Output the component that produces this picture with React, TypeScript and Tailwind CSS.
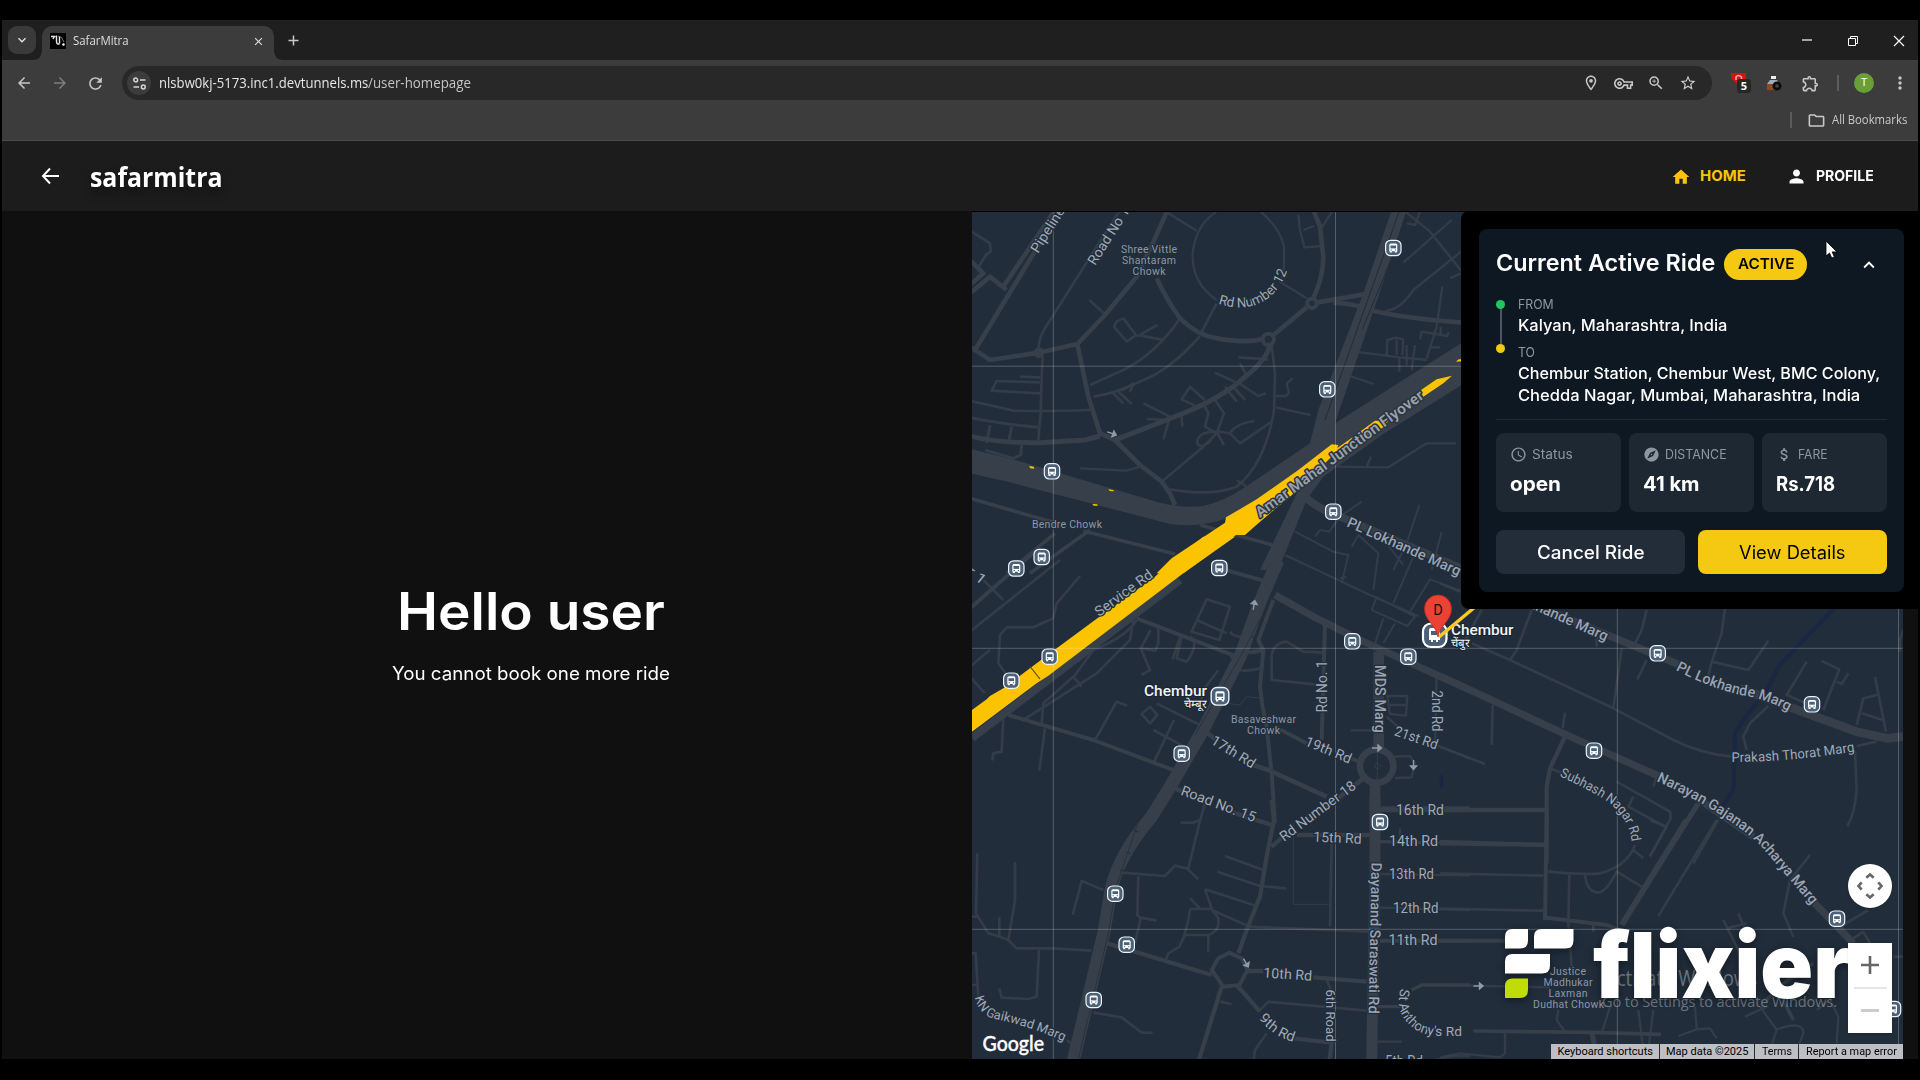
import { useLayoutEffect, useRef, useState } from "react";
import type { ReactNode } from "react";
import {
  MdArrowBack,
  MdArrowForward,
  MdClose,
  MdExplore,
  MdHome,
  MdPerson,
  MdAccessTime,
  MdOutlineLocationOn,
  MdOutlineVpnKey,
  MdStarOutline,
  MdRefresh,
  MdMoreVert,
  MdZoomIn,
  MdOutlineFolder,
  MdOutlineExtension,
  MdKeyboardArrowUp,
  MdKeyboardArrowDown,
  MdAttachMoney,
} from "react-icons/md";

/* One line of text, widened or condensed so that it fills a given width. */
function Fit({ w, className = "", children }: { w: number; className?: string; children: ReactNode }) {
  const ref = useRef<HTMLSpanElement>(null);
  const [k, setK] = useState(1);
  useLayoutEffect(() => {
    const el = ref.current;
    if (el && el.offsetWidth) setK(w / el.offsetWidth);
  }, [w]);
  return (
    <span className={`inline-block whitespace-nowrap text-left ${className}`} style={{ width: w }}>
      <span ref={ref} className="inline-block origin-left" style={{ transform: `scaleX(${k})` }}>
        {children}
      </span>
    </span>
  );
}

/* ---------- browser chrome ---------- */

function TabStrip() {
  return (
    <div className="flex h-10 items-end bg-[#1f1f1f]">
      <div className="mb-1.5 ml-[6px] flex h-7 w-7 items-center justify-center rounded-[9px] bg-[#3a3a3a] text-[#e3e3e3]">
        <MdKeyboardArrowDown size={16} />
      </div>
      <svg className="ml-[-4px]" width="10" height="10" viewBox="0 0 10 10"><path d="M10 0v10H0Q10 10 10 0z" fill="#3c3c3c" /></svg>
      <div className="flex h-[34px] w-[232px] items-center rounded-t-[10px] bg-[#3c3c3c] pb-1 pl-[8px] pr-[9px]">
        <svg width="16" height="16" viewBox="0 0 16 16">
          <rect width="16" height="16" fill="#000" />
          <path d="M1 3.500h4.500M3 6l1.500-3M6.500 2.500v6q0 3 3 2.500M9.500 3.500v7" stroke="#e8e8e8" strokeWidth="1.400" fill="none" />
          <path d="M8 3q4 0 6 6" stroke="#9a9a9a" strokeWidth=".8" fill="none" />
          <circle cx="13.500" cy="11.500" r="1.200" fill="#fff" />
        </svg>
        <Fit w={56} className="ml-[7px] font-['Open_Sans'] text-[12px] text-[#dedede]">SafarMitra</Fit>
        <MdClose className="ml-auto text-[#e0e0e0]" size={13} />
      </div>
      <svg width="10" height="10" viewBox="0 0 10 10"><path d="M0 0v10h10Q0 10 0 0z" fill="#3c3c3c" /></svg>
      <svg className="mb-[13px] ml-[3px]" width="13" height="13" viewBox="0 0 13 13">
        <path d="M6.500 1.500v10M1.500 6.500h10" stroke="#c8c8c8" strokeWidth="1.500" />
      </svg>
      <div className="mb-[13px] ml-auto mr-[13px] flex items-center gap-[34px] text-white">
        <svg width="11" height="13" viewBox="0 0 11 13"><path d="M0 6h10" stroke="#fff" strokeWidth="1.200" /></svg>
        <svg width="12" height="12" viewBox="0 0 12 12"><path d="M1.500 3.500h7v7h-7zM3.500 3.500v-2h7v7h-2" stroke="#fff" fill="none" /></svg>
        <svg width="12" height="12" viewBox="0 0 12 12"><path d="M1 1l10 10M11 1L1 11" stroke="#fff" strokeWidth="1.200" /></svg>
      </div>
    </div>
  );
}

function AddressBar() {
  return (
    <div className="flex h-[46px] items-center bg-[#3c3c3c] text-[#c7c7c7]">
      <MdArrowBack className="ml-[13px]" size={18} />
      <MdArrowForward className="ml-[18px] text-[#7d7d7d]" size={18} />
      <MdRefresh className="ml-[17px]" size={19} />
      <div className="ml-[17px] flex h-[34px] w-[1590px] items-center rounded-full bg-[#282828] pl-[5px] pr-[15px]">
        <div className="flex h-[24px] w-[24px] items-center justify-center rounded-full bg-[#3c3c3c]">
          <svg width="13" height="13" viewBox="0 0 13 13" fill="none" stroke="#d5d5d5" strokeWidth="1.500">
            <circle cx="2.700" cy="3" r="1.900" /><path d="M7 3h5.500M.5 10h5.500" /><circle cx="10.300" cy="10" r="1.900" />
          </svg>
        </div>
        <span className="ml-[8px] flex font-['Open_Sans'] text-[14.5px] text-[#e6e6e6]">
          <Fit w={209}>nlsbw0kj-5173.inc1.devtunnels.ms</Fit>
          <Fit w={103} className="text-[#c4c4c4]">/user-homepage</Fit>
        </span>
        <div className="ml-auto flex items-center gap-[14px]">
          <MdOutlineLocationOn size={18} />
          <MdOutlineVpnKey size={19} />
          <MdZoomIn size={18} />
          <MdStarOutline size={18} />
        </div>
      </div>
      <div className="relative ml-[18px] h-[22px] w-[22px]">
        <svg width="18" height="16" viewBox="0 0 18 16">
          <path d="M1 1h15v7l-4 4H7L1 6z" fill="#d01414" />
          <path d="M6 8V5q2.500-3 5.500 0v3" stroke="#f5b0b0" strokeWidth="1.500" fill="none" />
        </svg>
        <span className="absolute left-[7px] top-[7px] flex h-[14px] w-[14px] items-center justify-center rounded-[3px] bg-[#262626] font-['Open_Sans'] text-[11px] font-bold text-white">5</span>
      </div>
      <svg className="ml-[13px]" width="18" height="17" viewBox="0 0 18 17">
        <rect x="2" y="9" width="8" height="6" fill="#8d4a22" /><path d="M2 9l3-4h7l2 4z" fill="#a3a9bd" />
        <rect x="6" y="1" width="5" height="3" fill="#e8eaf5" /><circle cx="12" cy="11" r="4.500" fill="#0d0d0d" /><circle cx="12" cy="11" r="1.800" fill="#444" />
      </svg>
      <MdOutlineExtension className="ml-[18px]" size={19} />
      <div className="ml-[17px] h-4 w-[2px] bg-[#5c5c5c]" />
      <div className="ml-[15px] flex h-5 w-5 items-center justify-center rounded-full bg-[#689f38] font-['Roboto'] text-[11px] text-white">T</div>
      <MdMoreVert className="ml-[16px] shrink-0" size={20} />
    </div>
  );
}

function Bookmarks() {
  return (
    <div className="flex h-[35px] items-center border-b border-[#4b4b4b] bg-[#3c3c3c] pb-[6px] text-[#c9c9c9]">
      <div className="ml-auto h-4 w-[2px] bg-[#5c5c5c]" />
      <MdOutlineFolder className="ml-[15px]" size={19} />
      <Fit w={75} className="ml-[6px] mr-[11px] font-['Open_Sans'] text-[12.5px]">All Bookmarks</Fit>
    </div>
  );
}

function SiteHeader() {
  return (
    <header className="flex h-[70px] items-center bg-[#1c1c1c]">
      <svg className="ml-[39px]" width="20" height="18" viewBox="0 0 20 18">
        <path d="M9 1.500L2 9l7 7.500M2 9h16" stroke="#fff" strokeWidth="2" fill="none" />
      </svg>
      <Fit w={132} className="ml-[29px] pt-[2px] font-['Open_Sans'] text-[26px] font-bold text-white drop-shadow-[0_6px_5px_rgba(0,0,0,0.4)]">safarmitra</Fit>
      <nav className="ml-auto mr-[44px] flex items-center pt-px font-['Inter'] text-[15px] font-bold">
        <MdHome className="text-[#fcc30b]" size={20} />
        <Fit w={46} className="ml-[9px] text-[#fcc30b]">HOME</Fit>
        <MdPerson className="ml-[40px] text-white" size={21} />
        <Fit w={58} className="ml-[9px] text-white">PROFILE</Fit>
      </nav>
    </header>
  );
}

/* ---------- map ---------- */

type Road = [number, string];

/* Road geometry per tile, in third-of-a-pixel units. */
const tiles: { x: number; y: number; roads: Road[] }[] = [
  {
    x: 970, y: 210,
    roads: [
      [14, "M0,410L60,450 205,428 322,402 405,315 500,200 548,100 595,-5M322,402L355,560 390,670 435,690 510,765 575,815 600,850 615,885"],
      [14, "M560,205Q590,270 630,325Q680,375 740,385Q830,400 875,388M910,375L1010,292M1030,265Q1060,200 1060,140L1050,50 1030,0M1040,278L1210,248M1090,278Q1150,280 1200,300Q1300,325 1480,338"],
      [15, "M900,405Q890,450 820,505Q760,560 640,610L440,688V700M0,678Q80,700 210,698L345,690 390,678"],
      [14, "M15,420L240,50 275,0M100,230L255,0M0,250L60,200 110,240M0,225L40,190 0,150"],
      [12, "M878,388a17,17 0 1,0 34,0a17,17 0 1,0 -34,0M1012,280a14,14 0 1,0 28,0a14,14 0 1,0 -28,0M197,428a10,10 0 1,0 20,0a10,10 0 1,0 -20,0"],
      [8, "M5,65L60,100 62,125 50,132 20,180M205,428Q205,385 225,355L380,110 450,0M218,440L215,500 212,610 205,690M150,500L210,502M210,550L65,542 80,513 210,517M0,573Q80,590 130,602Q210,605 360,600"],
      [9, "M0,623Q80,640 205,652M60,645L50,700M125,650L115,700M155,705L152,735 130,745 45,720"],
      [8, "M358,270L405,313M440,335L460,325 498,375 470,395 432,350ZM500,380L562,345M510,376L580,390M690,375L740,280M630,325Q560,430 460,480L360,525M690,378Q600,480 520,510Q440,550 370,560"],
      [7, "M740,270Q665,220 668,130Q675,60 720,20L750,-5M860,-5Q930,50 942,110V165Q940,200 930,215L1010,265M595,10L680,62M985,15L990,60 1003,112 1055,108M1000,60L1032,48M1050,60L1090,0"],
      [8, "M905,405L915,490 912,600Q900,680 870,740Q840,800 800,830Q720,860 600,838M575,815L700,710 740,670M700,580L715,610 705,650 740,670 762,610 735,570M740,665Q680,665 682,700Q690,720 725,690M740,665L762,705M745,665L780,670 810,700 905,635M780,668Q800,640 853,633"],
      [8, "M520,580L600,620 580,688M530,627L590,630M635,620L637,650M705,570L660,530 635,568 685,592M735,488L795,515M765,530L800,575M785,525L825,570M800,515L865,558 888,550M810,460L832,500M805,442L895,448M425,545L460,580M440,540L485,582M455,542L490,520 480,545"],
      [7, "M945,560L957,550 950,520 968,505M915,558H950M918,592L1022,615M330,775L470,782 510,770M800,810L830,830M1130,495L1212,522M1155,425L1290,442 1370,450M1095,770L1255,772 1370,700 1458,700M1190,770L1203,740"],
      [7, "M1300,0L1380,65 1480,190M1445,30L1300,158M1473,125Q1380,200 1330,240Q1290,300 1245,303M1310,40L1335,45 1352,0M1250,435L1252,390 1278,383 1300,388 1297,435M1280,390V435M1310,405V465M1335,405L1325,480M1288,445V485M1417,230L1400,350 1370,445M1350,388L1355,365 1432,378 1436,366M1412,350V375M1380,412H1410M1440,205L1473,190"],
      [11, "M0,865L260,940M340,963L615,1032M690,945L925,1010M360,960L180,1090M255,970L110,1090"],
      [24, "M1010,865Q1060,905 1110,920L1480,1078"],
      [6, "M975,965L1090,1025 1135,1035 1115,1120M1035,980L1050,960 1078,965 1110,920 1175,875M1145,1010L1165,975 1225,1030 1210,1140M1250,1000L1300,1065M1348,885L1310,1000 1270,1080M1415,965L1385,1080"],
    ],
  },
  {
    x: 970, y: 540,
    roads: [
      [12, "M760,88L880,122M0,205L200,30M500,235L800,350M115,525L370,600 610,690M1065,250L1055,600M915,560L1010,610M1130,650L1180,670M1230,805H1500"],
      [8, "M0,275L270,60M30,110L100,180M330,108L260,190 250,235 190,262 110,262 90,285 85,370 110,405M0,380L60,330M0,410L45,460"],
      [22, "M915,165L1040,235 1170,300 1500,450"],
      [6, "M945,45L1200,165 1345,228M1130,110L1110,115M1270,190L1330,50M1320,215L1380,118 1480,155M1205,210L1220,172 1335,230 1312,258 1205,210M1240,235L1215,310M1275,250L1240,310"],
      [8, "M710,178L780,200 748,300 665,275ZM680,240L770,280M780,275Q790,290 815,290M490,240L480,300 380,400 160,540M500,240Q470,290 370,330L315,405 220,490 215,550M310,410L335,440M542,270L512,325 540,390 515,405M515,325L555,332M565,260V310L555,335M630,290L608,358M660,290Q690,310 650,365L620,355 635,290"],
      [12, "M910,180L865,300 880,330M780,350L880,330 870,440Q875,500 890,560L905,700 915,850"],
      [8, "M905,345Q910,310 950,305L1000,335 1065,338M905,345V420L1035,433M800,390Q840,395 870,385M745,390L700,450 690,500"],
      [8, "M100,530L95,635 70,640 67,662M225,565L208,692M375,600L440,485 472,497M550,570L680,640M612,540L550,670M515,522L540,500 562,525 540,550ZM560,490L690,555"],
      [14, "M700,570L740,600M850,675L895,690 1070,770M600,740L640,755M1180,715L1060,810"],
      [20, "M1170,678a50,50 0 1,0 100,0a50,50 0 1,0 -100,0"],
      [32, "M1226,335V625M1215,735V850"],
      [7, "M1270,650L1320,648 1335,670 1325,712 1275,714M1142,571H1230M1400,400L1395,620M1385,610L1500,655M1252,468H1312L1308,527 1260,522ZM1255,495H1308M1250,530L1285,562"],
      [3, "M1222,625V735M1212,678L1222,668 1232,678 1222,688ZM770,490L810,495 830,470 880,475"],
    ],
  },
  {
    x: 970, y: 800,
    roads: [
      [13, "M905,0L912,60 890,170 870,290 830,390 805,460M780,35L905,75M905,140L940,110M980,105H1200M405,428L725,525M755,560L685,785M800,555L870,635M970,715L1085,728 1078,785M830,513H880M1030,532L1190,545"],
      [12, "M725,510L745,475 778,458 815,475 833,510 808,555 760,560Z"],
      [8, "M840,380L1200,395M1085,130L1080,380M765,168L880,210M742,215L870,258 950,265M705,268L860,318M705,268L725,325M725,330L835,378M660,295L690,325M660,327L725,327 745,355Q750,395 715,405H645M660,327L655,360 642,410 628,440 595,460 588,480M715,405V455"],
      [3, "M970,70V313H1080"],
      [8, "M455,218L585,228 615,197 650,205 685,238M655,205L688,70 705,10M632,68L670,68 688,60M505,228L502,345 512,355 495,430M512,353L560,362M400,270L335,243 308,345M750,605L785,612M865,635L895,605 1190,632M890,700L855,750 850,785M1070,540L1085,575M370,638L455,652 515,698 548,698"],
      [8, "M22,160L18,340 55,400 90,410 115,420 140,445 250,445 365,452M135,185V300L115,420M0,350H20M88,350V408M207,450L200,590 175,597 95,593 88,565M0,460L17,460 25,590M0,555H20"],
      [33, "M1215,-10V200L1205,785"],
      [10, "M1230,32H1500M1230,125L1500,130M1325,570L1355,555H1500M1220,620H1310"],
      [7, "M1230,222L1500,226M1230,323L1500,330M1220,725H1296M1290,85V110M1370,785L1450,768H1500"],
      [12, "M1230,422H1500"],
      [8, "M290,720L330,750"],
    ],
  },
  {
    x: 1440, y: 580,
    roads: [
      [22, "M0,288L380,465 660,590M780,660L940,770M260,65L720,255"],
      [26, "M900,325L1100,400 1250,455 1340,475 1390,470"],
      [8, "M95,190L210,240 520,385 700,480Q780,520 875,530M275,90L230,210 210,240M0,10L60,35M125,90L70,190M620,90L605,150 585,190M620,240L592,298M545,205L520,385M855,85L845,160 815,245 925,270 985,182M815,245L800,310 875,340M470,170V200"],
      [8, "M1100,245L1040,345 1110,375M1145,243L1198,268 1150,390M1190,305L1205,312 1225,280M1305,290L1338,455M1312,345L1270,355 1250,435M1265,400L1335,422M985,378L930,430 910,470 920,510M1245,515L1250,630Q1245,700 1222,738M1250,498L1310,485M158,375L155,495M375,398L368,445M0,500L135,552"],
      [13, "M375,470L330,565 320,620 320,850M15,690H320M0,790L320,795"],
      [8, "M330,565L365,578M530,605L690,695 692,715 630,830M580,650L565,680 675,740M835,720L760,850M640,620L650,590M1390,150L1380,180V215"],
      [16, "M775,670L660,850"],
    ],
  },
  {
    x: 1440, y: 820,
    roads: [
      [12, "M320,-10L315,300M0,65L320,75M320,293L500,315 540,330M0,362H200"],
      [18, "M740,0L545,315"],
      [8, "M830,0L655,288M0,160L310,167M0,266L310,272M325,155Q430,165 480,160Q560,140 585,75M435,165Q440,215 475,218Q500,215 530,155L605,200M580,90L610,115M388,165L385,310 395,440M460,315V335M630,108L680,20 630,0"],
      [8, "M1110,105L1050,180 1030,280 1060,350M895,280L925,350M850,300L900,400M860,325L920,310M1225,365L1270,335 1290,370M1360,410H1390M1205,318L1285,270"],
      [22, "M1120,245L1240,370"],
      [7, "M0,495L330,502M355,570L350,600 375,635M485,640L510,560M595,570L610,690M640,570L625,690M765,560L770,628M715,648L770,628 810,625 830,655M960,560L1010,630 990,690M1010,628Q1090,600 1090,640L1070,690M195,637V700L180,712 60,700 0,712M915,590L980,560M1130,570L1170,540 1195,590 1190,670"],
      [11, "M100,633L455,637 663,643"],
      [15, "M455,637L467,690"],
      [11, "M980,540Q1030,480 1120,430M1030,540L1060,600"],
    ],
  },
];

type Label = { t: string; d: string; len: number; s?: number; w?: number };

const labels: Label[] = [
  { t: "Pipeline Rd", d: "M1038,254L1092,168", len: 72, s: 14 },
  { t: "Road No 13", d: "M1095,266L1155,172", len: 73, s: 14 },
  { t: "Rd Number 12", d: "M1218,303.500Q1246,313 1267,299Q1284,287 1289.500,262", len: 86, s: 13.5 },
  { t: "Service Rd", d: "M1099,617L1156,575", len: 68, s: 14 },
  { t: "r 1", d: "M966,573L990,592", len: 20, s: 14 },
  { t: "PL Lokhande Marg", d: "M1346,526L1460,577", len: 123, s: 14.5, w: 500 },
  { t: "PL Lokhande Marg", d: "M1494,592L1607,642", len: 122, s: 14.5, w: 500 },
  { t: "PL Lokhande Marg", d: "M1675.500,670Q1708,687 1740,695Q1764,698 1790,712", len: 121, s: 14.5, w: 500 },
  { t: "17th Rd", d: "M1210,743L1254,770", len: 49 },
  { t: "19th Rd", d: "M1304,745L1352,765", len: 49 },
  { t: "Rd No. 1", d: "M1327.500,712.500V655", len: 52 },
  { t: "MDS Marg", d: "M1374.500,665V735", len: 68, w: 500 },
  { t: "2nd Rd", d: "M1431.500,690.500V735", len: 41 },
  { t: "21st Rd", d: "M1393.500,735L1440,751", len: 45 },
  { t: "16th Rd", d: "M1396,814.500H1450", len: 48 },
  { t: "15th Rd", d: "M1313,841.500L1364,844", len: 48.500 },
  { t: "14th Rd", d: "M1389,846H1440", len: 49 },
  { t: "13th Rd", d: "M1389,878.500H1440", len: 45 },
  { t: "12th Rd", d: "M1393,913H1443", len: 45.500 },
  { t: "11th Rd", d: "M1388.500,945H1440", len: 49 },
  { t: "10th Rd", d: "M1263,977.500L1316,981", len: 49 },
  { t: "Rd Number 18", d: "M1284,842L1358,787", len: 91 },
  { t: "Road No. 15", d: "M1180,794.500L1256,823", len: 79 },
  { t: "Dayanand Saraswati Rd", d: "M1371.500,862.500L1368.500,1016", len: 151, s: 14.5, w: 500 },
  { t: "St Anthony's Rd", d: "M1401,988Q1394,1011 1410,1025Q1421,1036 1442,1036H1480", len: 95, s: 13.5 },
  { t: "9th Rd", d: "M1258.500,1018Q1273,1037 1294,1042", len: 43 },
  { t: "6th Road", d: "M1326,989.500V1045", len: 52, s: 13.5 },
  { t: "5th Rd", d: "M1385,1066H1425", len: 38 },
  { t: "KN Gaikwad Marg", d: "M975,997Q978,1012 991,1018Q1030,1026 1070,1044", len: 104, s: 13 },
  { t: "Prakash Thorat Marg", d: "M1731.500,762Q1790,762 1857,751", len: 124, s: 13.5 },
  { t: "Narayan Gajanan Acharya Marg", d: "M1656,781Q1722,810 1760,845L1814,908", len: 202, s: 14.5, w: 500 },
  { t: "Subhash Nagar Rd", d: "M1559,776Q1600,795 1612,805Q1631,823 1632,845", len: 103, s: 13.5 },
];

const places: [number, number, number, string][] = [
  [1149, 252.5, 56, "Shree Vittle"], [1149, 263.5, 54, "Shantaram"], [1149, 274.5, 33, "Chowk"],
  [1067, 528, 70, "Bendre Chowk"], [1263.5, 723, 65, "Basaveshwar"], [1263.5, 734, 33, "Chowk"],
  [1568, 975, 36, "Justice"], [1568, 986, 49, "Madhukar"], [1568, 997, 39, "Laxman"], [1568.5, 1008, 71, "Dudhat Chowk"],
];

const stops: [number, number][] = [
  [1393.3, 248], [1327.3, 389.3], [1052, 471.3], [1333.3, 511.7], [1041.7, 557], [1016.3, 568.5], [1219.3, 568],
  [1049.7, 656.7], [1011.3, 680.7], [1352.3, 641.3], [1408.3, 656.7], [1181.7, 753.7], [1380, 822], [1115.3, 893.7],
  [1126.7, 944.7], [1093.7, 1000], [1657.7, 653.3], [1812, 704.3], [1594, 750.7], [1837, 918.7], [1893, 1009],
];

const arrows: [number, number, number][] = [
  [1112, 433.5, 20], [1254, 605, -80], [1377, 748, 0], [1413.5, 765, 90], [1246, 963, 60], [1478.5, 986, 0],
];

function Stop({ x, y, k = 1 }: { x: number; y: number; k?: number }) {
  return (
    <g transform={`translate(${x} ${y}) scale(${k})`}>
      <rect x="-7.700" y="-7.700" width="15.400" height="15.400" rx="5" fill="#4b6178" stroke="#eef4fa" strokeWidth="1.200" />
      <path d="M-4-2.800q0-1.600 1.600-1.600h4.800q1.600 0 1.600 1.600V3.200h-8z" fill="#fff" />
      <path d="M-2.800-2.500h5.600v2.900h-5.600z" fill="#4b6178" />
      <path d="M-3.500 3h2v1.600h-2zM1.500 3h2v1.600h-2z" fill="#fff" />
      <path d="M-2.700 1.500h1.200v1h-1.200zM1.500 1.500h1.200v1h-1.200z" fill="#4b6178" />
    </g>
  );
}

function CityMap() {
  const road = "#363f4a";
  return (
    <svg className="block font-['Roboto']" width="931" height="847" viewBox="972 212 931 847">
      <rect x="972" y="212" width="931" height="847" fill="#212d3b" />
      <g transform="translate(1440 580) scale(.33333)" fill="none" stroke="#1a2742" strokeWidth="12">
        <path d="M1183,85L1100,170 1020,255 980,330 910,420 885,460 882,600 880,630 840,690" />
        <path d="M0,585L8,588V622H0Z" fill="#1a2742" strokeWidth="2" />
      </g>
      {tiles.map((tile, i) => (
        <g key={i} transform={`translate(${tile.x} ${tile.y}) scale(.33333)`} fill="none" stroke={road} strokeLinejoin="round">
          {tile.roads.map(([w, d], j) => <path key={j} d={d} strokeWidth={w} opacity={w < 10 ? 0.85 : 1} />)}
        </g>
      ))}
      {/* highways */}
      <g fill={road}>
        <path transform="translate(970 210) scale(.33333)" d="M0,716L135,750 570,878Q640,895 700,888Q760,875 820,835L1020,700 1045,600 1180,250 1265,0H1310L1225,260 1095,640 1480,395V522L1240,672 1060,800 1010,870 925,1080H870L985,840 850,945 770,925Q690,955 600,942L120,817 0,790Z" />
      </g>
      <g fill="none" stroke={road}>
        <path d="M1278,560L1260,602 1240,657 1203,730 1170,787 1152,816Q1118,856 1111,890L1104,932 1073,1062" strokeWidth="13" />
        <path d="M972,738L1180,580" strokeWidth="8" />
      </g>
      <g fill="none" stroke="#212d3b" strokeWidth="1">
        <path d="M1399,212L1325,420" /><path d="M1393,255L1362,330" />
      </g>
      <g fill="none" stroke="#252f3a" strokeWidth="1" opacity=".8">
        <path d="M1272,597L1240,657 1195,735M1138,822L1116,888 1108,935 1078,1060" />
        <path d="M1252,636l4 4m-8 14l6 1M1134,830l4 2m-12 20l4 2m-10 16l5 1m-11 50l4 1m-8 27l4 1m-9 24l4 1" strokeWidth="1.500" />
      </g>
      {/* congested flyover */}
      <g fill="#fcc400">
        <path transform="translate(970 210) scale(.33333)" d="M560,1090L605,1045 765,938 768,922 860,868 985,780 1085,703 1105,705 1102,714 1148,682 1140,697 1080,745 960,860 870,935 825,975 798,975 640,1090ZM1170,665L1215,632 1255,632 1240,652 1190,680ZM1350,542L1400,508 1446,497 1420,520 1360,560ZM1458,455L1466,448 1476,448V454ZM177,768l14,2 2,6-12,-1zM415,838l14,2 4,4-14,-1zM367,882l14,1 3,4-13,0z" />
        <path transform="translate(970 540) scale(.33333)" d="M0,514L50,478 60,468 100,445 250,332 375,240 555,110 600,68 700,-10H795L640,100 235,407 200,430 0,580Z" />
      </g>
      <path d="M1030,666.500L1040,679" stroke="#5b4a12" strokeWidth="1.200" />
      {/* tile seams */}
      <path d="M1053.300 212V1059M1335.500 212V1059M1617.300 212V1059M1898.500 212V1059M972 366.200H1903M972 648.300H1903M972 929.300H1903" stroke="#fff" strokeOpacity=".24" fill="none" />
      {arrows.map(([x, y, a], i) => (
        <path key={i} transform={`translate(${x} ${y}) rotate(${a})`} d="M-5 0H3M1-3L4.500 0 1 3Z" stroke="#8f99a8" strokeWidth="1.400" fill="#8f99a8" />
      ))}
      {labels.map((l, i) => (
        <g key={i}>
          <path id={`label-${i}`} d={l.d} fill="none" />
          <text fontSize={l.s || 14} fontWeight={l.w || 400} fill={l.w ? "#9aa3b1" : "#a0a9b7"} stroke="#212d3b" strokeWidth="2.500" strokeLinejoin="round" paintOrder="stroke">
            <textPath href={`#label-${i}`} textLength={l.len} lengthAdjust="spacingAndGlyphs">{l.t}</textPath>
          </text>
        </g>
      ))}
      <path id="flyover" d="M1260,518L1430,394" fill="none" />
      <text fontSize="15" fontWeight="600" fill="#9aa1ab" stroke="#2b3540" strokeWidth="3" strokeLinejoin="round" paintOrder="stroke">
        <textPath href="#flyover" textLength="204" lengthAdjust="spacingAndGlyphs">Amar Mahal Junction Flyover</textPath>
      </text>
      {places.map(([x, y, w, t], i) => (
        <text key={i} x={x} y={y} textLength={w} textAnchor="middle" fontSize="10.500" fill="#8c98a8" stroke="#212d3b" strokeWidth="2" paintOrder="stroke">{t}</text>
      ))}
      {stops.map(([x, y], i) => <Stop key={i} x={x} y={y} />)}
      <Stop x={1220} y={696.3} k={1.15} />
      <g fill="#f2f5f8" stroke="#1a2430" strokeWidth="2" paintOrder="stroke">
        <text x="1144" y="695.500" textLength="63" lengthAdjust="spacingAndGlyphs" fontSize="15" fontWeight="500">Chembur</text>
        <text x="1207" y="708" textAnchor="end" fontSize="11.500">चेम्बूर</text>
        <text x="1451" y="634.500" textLength="62.500" lengthAdjust="spacingAndGlyphs" fontSize="15" fontWeight="500">Chembur</text>
        <text x="1451" y="647" fontSize="11.500">चेंबुर</text>
      </g>
      <rect x="1423" y="623.500" width="23.500" height="23.500" rx="8" fill="#4b6178" stroke="#fff" strokeWidth="2.200" />
      <path d="M1429 630q0-2 2-2h7q2 0 2 2v10h-2v2h-2v-2h-3v2h-2v-2h-2z" fill="#fff" />
      <path d="M1431 631h6v4h-6z" fill="#4b6178" />
      <path d="M1439 637L1475 607" stroke="#fbc926" strokeWidth="3.500" />
      <path d="M1438 637C1437 626 1424.500 621 1424.500 608.500A13.500 13.500 0 0 1 1451.500 608.500C1451.500 621 1439 626 1438 637Z" fill="#ea4335" stroke="#c5221f" strokeWidth=".8" />
      <text x="1438" y="615" textAnchor="middle" fontSize="14.500" fill="#111">D</text>
      <text x="982.500" y="1050.500" textLength="61.500" lengthAdjust="spacingAndGlyphs" fontFamily="Lato" fontWeight="500" fontSize="21.500" fill="#fff" stroke="#fff" strokeWidth=".4">Google</text>
    </svg>
  );
}

function MapControls() {
  return (
    <div className="absolute right-[11px] top-[652px] flex flex-col items-center gap-[35px]">
      <div className="flex h-11 w-11 items-center justify-center rounded-full bg-white shadow">
        <svg width="26" height="26" viewBox="0 0 26 26" fill="none" stroke="#666" strokeWidth="2.600">
          <path d="M9.300 4.700L13 1.500l3.700 3.200M9.300 21.300l3.700 3.200 3.700-3.200M4.700 9.300L1.500 13l3.200 3.700M21.300 9.300l3.200 3.700-3.200 3.700" />
        </svg>
      </div>
      <div className="flex h-[90px] w-11 flex-col items-center bg-white shadow">
        <svg className="mt-[13px]" width="18" height="18" viewBox="0 0 18 18"><path d="M9 0v18M0 9h18" stroke="#666" strokeWidth="2.600" /></svg>
        <div className="mt-[13px] h-[2px] w-[33px] bg-[#e6e6e6]" />
        <div className="mt-[20px] h-[3px] w-[18px] bg-[#ccc]" />
      </div>
    </div>
  );
}

function Attribution() {
  return (
    <div className="absolute bottom-0 right-0 flex h-[15px] gap-px font-['Roboto'] text-[11px] leading-[15px] text-black">
      <div className="w-[108px] bg-[#bdbfc2] text-center"><Fit w={95}>Keyboard shortcuts</Fit></div>
      <div className="w-[94px] bg-[#bdbfc2] text-center"><Fit w={82}>Map data ©2025</Fit></div>
      <div className="w-[43px] bg-[#bdbfc2] text-center"><Fit w={30}>Terms</Fit></div>
      <div className="w-[104px] bg-[#bdbfc2] text-center"><Fit w={91}>Report a map error</Fit></div>
    </div>
  );
}

/* Watermarks drawn over the map's lower right corner. */
function Watermark() {
  return (
    <div className="absolute left-[523px] top-[704px]">
      <svg width="370" height="110" viewBox="1495 916 370 110">
        <g fill="#fff" fillOpacity=".36" fontFamily="Open Sans">
          <text x="1605" y="985.500" fontSize="21" textLength="152" lengthAdjust="spacingAndGlyphs">Activate Windows</text>
          <text x="1602" y="1006.500" fontSize="14.500" textLength="235">Go to Settings to activate Windows.</text>
        </g>
        <g className="drop-shadow-[0_2px_4px_rgba(0,0,0,0.45)]">
          <path d="M1505 936.500q0-7.500 7.500-7.500H1528V940.500q0 8-8 8H1505zM1534 936.500q0-7.500 7.500-7.500H1573.500V940.500q0 8-8 8H1534zM1505 961.500q0-7.500 7.500-7.500H1550V965.500q0 8-8 8H1505z" fill="#fff" />
          <path d="M1505 986q0-7.500 7.500-7.500H1528V990q0 8-8 8H1505z" fill="#c0dc06" />
          <text x="1593" y="998" textLength="258" lengthAdjust="spacingAndGlyphs" fontFamily="Inter" fontWeight="900" fontSize="91" fill="#fff">flixier</text>
        </g>
      </svg>
    </div>
  );
}

/* ---------- ride panel ---------- */

function Stat({ icon, label, lw, value, vw }: { icon: ReactNode; label: string; lw: number; value: string; vw: number }) {
  return (
    <div className="h-[79px] rounded-lg bg-[#1e2833] pl-[14px] pt-[13px]">
      <div className="flex h-[17px] items-center gap-[5px] text-[#8d96a1]">
        {icon}
        <Fit w={lw} className="text-[13px] leading-[17px]">{label}</Fit>
      </div>
      <div className="mt-[9px] leading-6"><Fit w={vw} className="text-[19.5px] font-bold text-white">{value}</Fit></div>
    </div>
  );
}

function RidePanel() {
  return (
    <section className="absolute left-[1461px] top-[211px] h-[398px] w-[459px] rounded-l-lg bg-black pl-[18px] pt-[18px] font-['Inter'] text-white">
      <div className="h-[363px] w-[425px] rounded-lg bg-[#0e1822] px-[17px] pt-5">
        <div className="flex h-[31px] items-center">
          <Fit w={219} className="mb-[3px] text-[22.5px] font-semibold leading-[30px]">Current Active Ride</Fit>
          <span className="ml-[9px] flex h-[31px] w-[83px] items-center justify-center rounded-full bg-[#f5c912] text-[15px] font-semibold text-black">
            <Fit w={56}>ACTIVE</Fit>
          </span>
          <MdKeyboardArrowUp className="ml-auto mr-[7px]" size={22} />
        </div>
        <div className="mt-4 flex">
          <div className="flex w-[9px] flex-col items-center pt-1">
            <div className="h-[9px] w-[9px] rounded-full bg-[#22c55e]" />
            <div className="h-[35px] w-[2px] bg-[#4b5563]" />
            <div className="h-[9px] w-[9px] rounded-full bg-[#f5c912]" />
          </div>
          <div className="ml-[13px] text-[16px] font-medium leading-[22px]">
            <div className="h-[18px] text-[13px] font-normal leading-[17px] text-[#8d96a1]"><Fit w={36}>FROM</Fit></div>
            <div className="h-[22px]"><Fit w={209}>Kalyan, Maharashtra, India</Fit></div>
            <div className="mt-[8px] h-[18px] text-[13px] font-normal leading-[17px] text-[#8d96a1]"><Fit w={17}>TO</Fit></div>
            <div className="h-[22px]"><Fit w={362}>Chembur Station, Chembur West, BMC Colony,</Fit></div>
            <div className="h-[22px]"><Fit w={342}>Chedda Nagar, Mumbai, Maharashtra, India</Fit></div>
          </div>
        </div>
        <div className="mt-[13px] h-px bg-[#212b36]" />
        <div className="mt-[13px] grid grid-cols-3 gap-2">
          <Stat icon={<MdAccessTime size={17} />} label="Status" lw={41} value="open" vw={51} />
          <Stat icon={<MdExplore size={17} />} label="DISTANCE" lw={62} value="41 km" vw={57} />
          <Stat icon={<MdAttachMoney size={17} />} label="FARE" lw={30} value="Rs.718" vw={59} />
        </div>
        <div className="mt-[18px] grid grid-cols-2 gap-[13px] text-[18px]">
          <button className="h-11 rounded-lg bg-[#232d39] font-medium"><Fit w={107}>Cancel Ride</Fit></button>
          <button className="h-11 rounded-lg bg-[#f5c912] text-black"><Fit w={107}>View Details</Fit></button>
        </div>
      </div>
      <svg className="absolute left-[364px] top-[29px]" width="14" height="19" viewBox="0 0 14 19">
        <path d="M1 1v15l3.500-3 2.300 5 2.600-1.100-2.300-5H12z" fill="#fff" stroke="#000" strokeWidth=".8" />
      </svg>
    </section>
  );
}

export default function App() {
  return (
    <div className="relative h-[1080px] w-[1920px] overflow-hidden bg-black px-[2px] pt-5">
      <TabStrip />
      <AddressBar />
      <Bookmarks />
      <SiteHeader />
      <main className="flex h-[848px] bg-[#101010]">
        <section className="flex w-[970px] flex-col items-center pl-[87px] pt-[366px] font-['Inter'] text-white">
          <h1 className="text-[51.5px] font-semibold leading-[68px]"><Fit w={268}>Hello user</Fit></h1>
          <p className="mt-[15px] text-[18px] leading-7"><Fit w={278}>You cannot book one more ride</Fit></p>
        </section>
        <section className="relative h-[848px] w-[931px] overflow-hidden border-t border-black">
          <CityMap />
          <Attribution />
          <Watermark />
          <MapControls />
        </section>
      </main>
      <RidePanel />
    </div>
  );
}
